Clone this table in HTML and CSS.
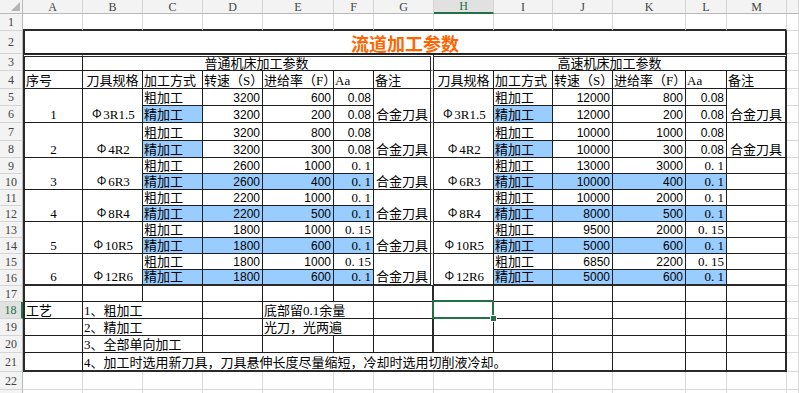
FILE: index.html
```html
<!DOCTYPE html>
<html lang="zh-CN">
<head>
<meta charset="utf-8">
<title>流道加工参数</title>
<link rel="stylesheet" href="styles.css">
</head>
<body>
<div class="sheet">
  <!-- column headers -->
  <div class="corner"><span class="tri"></span></div>
  <div class="ch">A</div><div class="ch">B</div><div class="ch">C</div><div class="ch">D</div><div class="ch">E</div><div class="ch">F</div><div class="ch">G</div><div class="ch sel">H</div><div class="ch">I</div><div class="ch">J</div><div class="ch">K</div><div class="ch">L</div><div class="ch">M</div><div class="ch"></div>

  <!-- row 1 -->
  <div class="rh">1</div>
  <div class="top"></div><div class="top"></div><div class="top"></div><div class="top"></div><div class="top"></div><div class="top"></div><div class="top"></div><div class="top"></div><div class="top"></div><div class="top"></div><div class="top"></div><div class="top"></div><div class="top"></div><div></div>

  <!-- row 2 -->
  <div class="rh">2</div>
  <div class="t l rr x13 title">流道加工参数</div><div></div>

  <!-- row 3 -->
  <div class="rh">3</div>
  <div class="t l tt"></div>
  <div class="t x6 dd tt c">普通机床加工参数</div>
  <div class="t x6 rr tt c">高速机床加工参数</div>
  <div></div>

  <!-- row 4 -->
  <div class="rh">4</div>
  <div class="t l">序号</div><div class="t c">刀具规格</div><div class="t">加工方式</div><div class="t">转速（S）</div><div class="t">进给率（F）</div><div class="t">Aa</div><div class="t dd">备注</div>
  <div class="t c">刀具规格</div><div class="t">加工方式</div><div class="t">转速（S）</div><div class="t">进给率（F）</div><div class="t">Aa</div><div class="t rr">备注</div><div></div>

  <!-- rows 5-6 -->
  <div class="rh">5</div>
  <div class="t l y2 c">1</div><div class="t y2 c"><span class="phi">Φ</span>3R1.5</div><div class="t">粗加工</div><div class="t r n">3200</div><div class="t r n">600</div><div class="t r n">0.08</div><div class="t y2 dd c">合金刀具</div>
  <div class="t y2 c"><span class="phi">Φ</span>3R1.5</div><div class="t">粗加工</div><div class="t r n">12000</div><div class="t r n">800</div><div class="t r n">0.08</div><div class="t y2 rr c">合金刀具</div><div></div>
  <div class="rh">6</div>
  <div class="t bl">精加工</div><div class="t r n">3200</div><div class="t r n">200</div><div class="t r n">0.08</div>
  <div class="t bl">精加工</div><div class="t r n">12000</div><div class="t r n">200</div><div class="t r n">0.08</div><div></div>

  <!-- rows 7-8 -->
  <div class="rh">7</div>
  <div class="t l y2 c">2</div><div class="t y2 c"><span class="phi">Φ</span>4R2</div><div class="t">粗加工</div><div class="t r n">3200</div><div class="t r n">800</div><div class="t r n">0.08</div><div class="t y2 dd c">合金刀具</div>
  <div class="t y2 c"><span class="phi">Φ</span>4R2</div><div class="t">粗加工</div><div class="t r n">10000</div><div class="t r n">1000</div><div class="t r n">0.08</div><div class="t y2 rr c">合金刀具</div><div></div>
  <div class="rh">8</div>
  <div class="t bl">精加工</div><div class="t r n">3200</div><div class="t r n">300</div><div class="t r n">0.08</div>
  <div class="t bl">精加工</div><div class="t r n">10000</div><div class="t r n">300</div><div class="t r n">0.08</div><div></div>

  <!-- rows 9-10 -->
  <div class="rh">9</div>
  <div class="t l y2 c">3</div><div class="t y2 c"><span class="phi">Φ</span>6R3</div><div class="t">粗加工</div><div class="t r n">2600</div><div class="t r n">1000</div><div class="t r">0. 1</div><div class="t y2 dd c">合金刀具</div>
  <div class="t y2 c"><span class="phi">Φ</span>6R3</div><div class="t">粗加工</div><div class="t r n">13000</div><div class="t r n">3000</div><div class="t r">0. 1</div><div class="t rr"></div><div></div>
  <div class="rh">10</div>
  <div class="t bl">精加工</div><div class="t r n bl">2600</div><div class="t r n bl">400</div><div class="t r bl">0. 1</div>
  <div class="t bl">精加工</div><div class="t r n bl">10000</div><div class="t r n bl">400</div><div class="t r bl">0. 1</div><div class="t rr"></div><div></div>

  <!-- rows 11-12 -->
  <div class="rh">11</div>
  <div class="t l y2 c">4</div><div class="t y2 c"><span class="phi">Φ</span>8R4</div><div class="t">粗加工</div><div class="t r n">2200</div><div class="t r n">1000</div><div class="t r">0. 1</div><div class="t y2 dd c">合金刀具</div>
  <div class="t y2 c"><span class="phi">Φ</span>8R4</div><div class="t">粗加工</div><div class="t r n">10000</div><div class="t r n">2000</div><div class="t r">0. 1</div><div class="t rr"></div><div></div>
  <div class="rh">12</div>
  <div class="t bl">精加工</div><div class="t r n bl">2200</div><div class="t r n bl">500</div><div class="t r bl">0. 1</div>
  <div class="t bl">精加工</div><div class="t r n bl">8000</div><div class="t r n bl">500</div><div class="t r bl">0. 1</div><div class="t rr"></div><div></div>

  <!-- rows 13-14 -->
  <div class="rh">13</div>
  <div class="t l y2 c">5</div><div class="t y2 c"><span class="phi">Φ</span>10R5</div><div class="t">粗加工</div><div class="t r n">1800</div><div class="t r n">1000</div><div class="t r">0. 15</div><div class="t y2 dd c">合金刀具</div>
  <div class="t y2 c"><span class="phi">Φ</span>10R5</div><div class="t">粗加工</div><div class="t r n">9500</div><div class="t r n">2000</div><div class="t r">0. 15</div><div class="t rr"></div><div></div>
  <div class="rh">14</div>
  <div class="t bl">精加工</div><div class="t r n bl">1800</div><div class="t r n bl">600</div><div class="t r bl">0. 1</div>
  <div class="t bl">精加工</div><div class="t r n bl">5000</div><div class="t r n bl">600</div><div class="t r bl">0. 1</div><div class="t rr"></div><div></div>

  <!-- rows 15-16 -->
  <div class="rh">15</div>
  <div class="t l y2 c bb">6</div><div class="t y2 c bb"><span class="phi">Φ</span>12R6</div><div class="t">粗加工</div><div class="t r n">1800</div><div class="t r n">1000</div><div class="t r">0. 15</div><div class="t y2 dd c bb">合金刀具</div>
  <div class="t y2 c bb"><span class="phi">Φ</span>12R6</div><div class="t">粗加工</div><div class="t r n">6850</div><div class="t r n">2200</div><div class="t r">0. 15</div><div class="t rr"></div><div></div>
  <div class="rh">16</div>
  <div class="t bl bb">精加工</div><div class="t r n bl bb">1800</div><div class="t r n bl bb">600</div><div class="t r bl bb">0. 1</div>
  <div class="t bl bb">精加工</div><div class="t r n bl bb">5000</div><div class="t r n bl bb">600</div><div class="t r bl bb">0. 1</div><div class="t rr bb"></div><div></div>

  <!-- row 17 -->
  <div class="rh">17</div>
  <div class="t l"></div><div class="t"></div><div class="t"></div><div class="t"></div><div class="t"></div><div class="t"></div><div class="t rr"></div>
  <div class="t"></div><div class="t"></div><div class="t"></div><div class="t"></div><div class="t"></div><div class="t rr"></div><div></div>

  <!-- row 18 -->
  <div class="rh sel">18</div>
  <div class="t l">工艺</div><div class="t x2">1、粗加工</div><div class="t"></div><div class="t x2">底部留0.1余量</div><div class="t rr"></div>
  <div class="t cur"></div><div class="t"></div><div class="t"></div><div class="t"></div><div class="t"></div><div class="t rr"></div><div></div>

  <!-- row 19 -->
  <div class="rh">19</div>
  <div class="t l"></div><div class="t x2">2、精加工</div><div class="t"></div><div class="t x2">光刀，光两遍</div><div class="t rr"></div>
  <div class="t"></div><div class="t"></div><div class="t"></div><div class="t"></div><div class="t"></div><div class="t rr"></div><div></div>

  <!-- row 20 -->
  <div class="rh">20</div>
  <div class="t l"></div><div class="t x2">3、全部单向加工</div><div class="t"></div><div class="t"></div><div class="t"></div><div class="t rr"></div>
  <div class="t"></div><div class="t"></div><div class="t"></div><div class="t"></div><div class="t"></div><div class="t rr"></div><div></div>

  <!-- row 21 -->
  <div class="rh">21</div>
  <div class="t l bb"></div><div class="t x8 bb">4、加工时选用新刀具，刀具悬伸长度尽量缩短，冷却时选用切削液冷却。</div>
  <div class="t bb"></div><div class="t bb"></div><div class="t bb"></div><div class="t rr bb"></div><div></div>

  <!-- row 22 -->
  <div class="rh">22</div>
  <div></div><div></div><div></div><div></div><div></div><div></div><div></div><div></div><div></div><div></div><div></div><div></div><div></div><div></div>

  <!-- row 23 (only its top edge is visible) -->
  <div class="rh"></div>
  <div></div><div></div><div></div><div></div><div></div><div></div><div></div><div></div><div></div><div></div><div></div><div></div><div></div><div></div>
</div>
</body>
</html>
```

FILE: styles.css
```css
html, body {
  margin: 0;
  padding: 0;
  overflow: hidden;
  background: #ffffff;
}

.sheet {
  display: grid;
  grid-template-columns: 23px 60px 60px 60px 60px 71px 40px 60px 60px 59px 60px 73px 41px 60px 12px;
  grid-template-rows: 14px 17px 23px 17px 18px 17px 17px 18px 17px 16px 16px 16px 16px 16px 16px 16px 16px 16px 17px 17px 17px 19px 18px 18px;
  width: 799px;
  font-family: "Liberation Serif", "Noto Sans CJK SC", serif;
  font-size: 13px;
  color: #000;
}

.sheet > div {
  box-sizing: border-box;
  display: flex;
  align-items: flex-end;
  justify-content: flex-start;
  min-width: 0;
  padding: 0 1px 0 1px;
  line-height: 14px;
  white-space: nowrap;
  overflow: visible;
  border-right: 1px solid #d9d9d9;
  border-bottom: 1px solid #d9d9d9;
}

/* headers */
.sheet > .corner {
  background: #f3f3f3;
  border-right: 1px solid #b9b9b9;
  border-bottom: 1px solid #b9b9b9;
  justify-content: flex-end;
  align-items: flex-end;
  padding: 0 2px 2px 0;
}
.tri {
  width: 0;
  height: 0;
  border-left: 9px solid transparent;
  border-bottom: 9px solid #b4b4b4;
}
.sheet > .ch {
  background: #f3f3f3;
  border-right: 1px solid #d4d4d4;
  border-bottom: 1px solid #b9b9b9;
  justify-content: center;
  align-items: center;
  font-size: 12px;
  line-height: 12px;
  color: #444;
}
.sheet > .rh {
  background: #f3f3f3;
  border-right: 1px solid #b9b9b9;
  border-bottom: 1px solid #d4d4d4;
  justify-content: center;
  align-items: center;
  font-size: 12px;
  line-height: 12px;
  color: #444;
}
.sheet > .ch.sel {
  background: #e1e1e1;
  color: #217346;
  border-bottom: 2px solid #217346;
}
.sheet > .rh.sel {
  background: #e1e1e1;
  color: #217346;
  border-right: 2px solid #217346;
}

/* table cells */
.sheet > .t {
  border-right: 1px solid #1e1e1e;
  border-bottom: 1px solid #1e1e1e;
}
.sheet > .top {
  border-bottom: 2px solid #2a2a2a;
}
.sheet > .l {
  border-left: 2px solid #2a2a2a;
}
.sheet > .rr {
  border-right: 2px solid #2a2a2a;
}
.sheet > .dd {
  border-right: 4px double #2a2a2a;
}
.sheet > .bb {
  border-bottom: 2px solid #2a2a2a;
}
.sheet > .tt {
  border-top: 3px double #2a2a2a;
  line-height: 13px;
}

.x2 { grid-column: span 2; }
.x6 { grid-column: span 6; }
.x8 { grid-column: span 8; }
.x13 { grid-column: span 13; }
.y2 { grid-row: span 2; }

.sheet > .c { justify-content: center; }
.sheet > .r { justify-content: flex-end; padding-right: 2px; }

.n {
  font-family: "Liberation Sans", "Noto Sans CJK SC", sans-serif;
  font-size: 12px;
}

.sheet > .bl {
  background: #99ccff;
}

.sheet > .title {
  justify-content: center;
  align-items: flex-end;
  font-family: "Noto Sans CJK SC", sans-serif;
  font-weight: bold;
  font-size: 18px;
  line-height: 19px;
  color: #ff6600;
}

.phi {
  display: inline-block;
  width: 13px;
  text-align: center;
  font-family: "Noto Sans CJK SC", sans-serif;
  font-size: 12px;
  position: relative;
  top: -2px;
}

/* selected cell */
.sheet > .cur {
  position: relative;
  z-index: 2;
}
.cur::after {
  content: "";
  position: absolute;
  left: -2px;
  top: -2px;
  right: -1px;
  bottom: -1px;
  border: 2px solid #217346;
}
.cur::before {
  content: "";
  position: absolute;
  right: -4px;
  bottom: -4px;
  width: 5px;
  height: 5px;
  background: #217346;
  border: 1px solid #fff;
  z-index: 1;
}
```
